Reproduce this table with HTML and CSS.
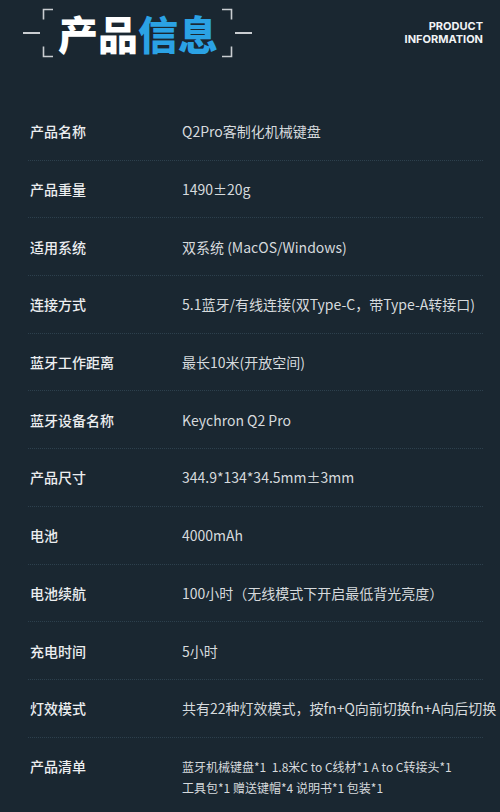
FILE: index.html
```html
<!DOCTYPE html>
<html lang="zh-CN">
<head>
    <meta charset="UTF-8">
    <meta name="viewport" content="width=device-width, initial-scale=1.0">
    <title>产品信息</title>
    <link rel="stylesheet" href="styles.css">
</head>
<body>
    <div class="page">
        <div class="header">
            <div class="title-group">
                <span class="dash"></span>
                <svg class="bracket" width="11" height="50" viewBox="0 0 11 50">
                    <path d="M11 1.5 H1.5 V11.5 M1.5 38.5 V48.5 H11" fill="none" stroke="#c9cdd1" stroke-width="1.6"/>
                </svg>
                <h1 class="title">产品<span class="blue">信息</span></h1>
                <svg class="bracket" width="11" height="50" viewBox="0 0 11 50">
                    <path d="M0 1.5 H9.5 V11.5 M9.5 38.5 V48.5 H0" fill="none" stroke="#c9cdd1" stroke-width="1.6"/>
                </svg>
                <span class="dash"></span>
            </div>
            <div class="english">PRODUCT<br>INFORMATION</div>
        </div>

        <div class="specs">
            <div class="row">
                <div class="label">产品名称</div>
                <div class="value">Q2Pro客制化机械键盘</div>
            </div>
            <div class="row">
                <div class="label">产品重量</div>
                <div class="value">1490±20g</div>
            </div>
            <div class="row">
                <div class="label">适用系统</div>
                <div class="value">双系统 (MacOS/Windows)</div>
            </div>
            <div class="row">
                <div class="label">连接方式</div>
                <div class="value">5.1蓝牙/有线连接(双Type-C，带Type-A转接口)</div>
            </div>
            <div class="row">
                <div class="label">蓝牙工作距离</div>
                <div class="value">最长10米(开放空间)</div>
            </div>
            <div class="row">
                <div class="label">蓝牙设备名称</div>
                <div class="value">Keychron Q2 Pro</div>
            </div>
            <div class="row">
                <div class="label">产品尺寸</div>
                <div class="value">344.9*134*34.5mm±3mm</div>
            </div>
            <div class="row">
                <div class="label">电池</div>
                <div class="value">4000mAh</div>
            </div>
            <div class="row">
                <div class="label">电池续航</div>
                <div class="value">100小时（无线模式下开启最低背光亮度）</div>
            </div>
            <div class="row">
                <div class="label">充电时间</div>
                <div class="value">5小时</div>
            </div>
            <div class="row">
                <div class="label">灯效模式</div>
                <div class="value">共有22种灯效模式，按fn+Q向前切换fn+A向后切换</div>
            </div>
            <div class="row last">
                <div class="label">产品清单</div>
                <div class="value">蓝牙机械键盘*1&nbsp;&nbsp;1.8米C to C线材*1 A to C转接头*1<br>工具包*1 赠送键帽*4 说明书*1 包装*1</div>
            </div>
        </div>
    </div>
</body>
</html>
```

FILE: styles.css
```css
body {
    margin: 0;
    background-color: #1a2731;
    font-family: "Noto Sans CJK SC", "Noto Sans", sans-serif;
    color: #e4e7ea;
}

.page {
    width: 500px;
    height: 812px;
    overflow: hidden;
}

/* header with bracketed title */
.header {
    display: flex;
    justify-content: space-between;
    align-items: center;
    height: 64px;
    padding: 0 17px 0 23px;
}

.title-group {
    display: flex;
    align-items: center;
    margin-top: 2px;
}

.dash {
    display: block;
    width: 17px;
    height: 1.6px;
    background-color: #c9cdd1;
}

.bracket {
    display: block;
    margin: 0 2px;
}

.title {
    margin: 0 2px 0 3px;
    font-size: 40px;
    font-weight: 900;
    line-height: 50px;
    color: #ffffff;
}

.blue {
    color: #2ba2e4;
}

.english {
    font-family: Inter, "Liberation Sans", sans-serif;
    font-weight: 700;
    font-size: 11px;
    line-height: 13px;
    text-align: right;
    color: #f2f4f6;
    margin-top: 2px;
}

/* spec list */
.specs {
    margin: 39px 17px 0 28px;
}

.row {
    display: grid;
    grid-template-columns: 152px 1fr;
    padding: 17.35px 0 17.35px 2px;
    line-height: 22px;
    font-size: 14px;
    border-bottom: 1px dotted #2d404d;
}

.row.last {
    border-bottom: none;
}

.label {
    font-weight: 500;
    color: #eceef0;
}

.value {
    color: #d6dadd;
    white-space: nowrap;
}

.row.last .value {
    font-size: 12px;
    line-height: 21px;
    padding-top: 1px;
}
```
